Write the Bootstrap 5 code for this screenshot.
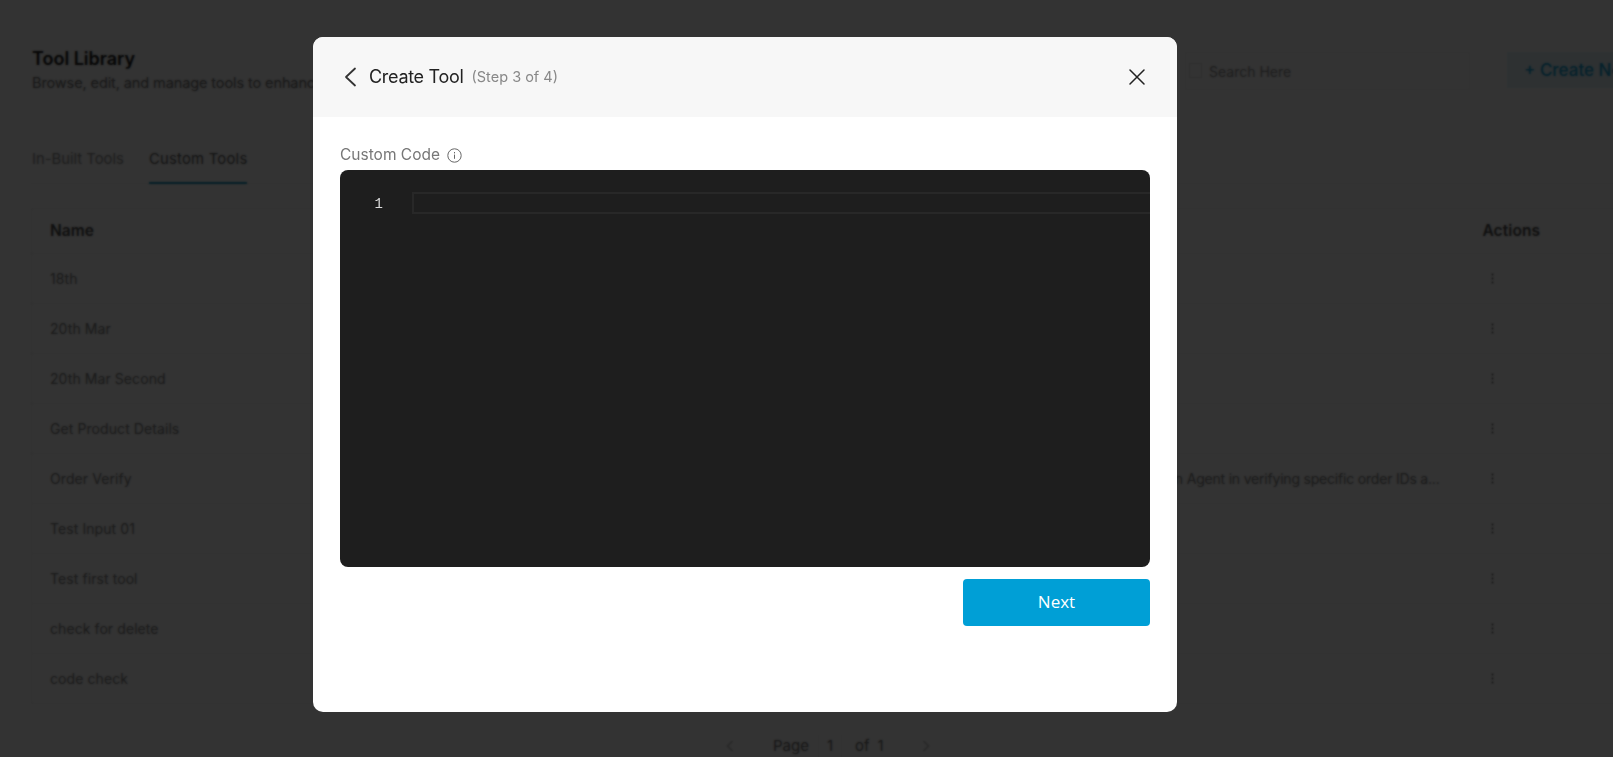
<!DOCTYPE html>
<html lang="en">
<head>
<meta charset="utf-8">
<title>Tool Library</title>
<link href="https://cdn.jsdelivr.net/npm/bootstrap@5.3.0/dist/css/bootstrap.min.css" rel="stylesheet">
<style>
html,body{height:100%;overflow:hidden}
body{font-family:"Inter","Liberation Sans",sans-serif;color:#333;background:#fff}
.page-wrap{width:1700px;padding:47px 0 0 31px}
.page-head{width:1640px;height:61px}
.lib-title{font-size:18px;font-weight:600;line-height:24px;color:#111;padding-left:1px}
.lib-sub{font-size:14.5px;line-height:22px;color:#666;letter-spacing:-.1px;padding-left:1px;margin-top:1px}
.search-box{width:285px;height:38px;margin-left:auto;margin-right:37px;margin-top:5px;border:1px solid #f2f2f2;font-size:14px;color:#888;padding-left:23px;display:flex;align-items:center;position:relative}
.search-ic{position:absolute;left:3px;top:10px;width:13px;height:15px;border:1px solid #e0e0e0}
.create-btn{width:164px;height:36px;margin-top:5px;background:#e3f3fa;color:#0a9fd4;font-size:17px;font-weight:500;padding:6px 0 0 17px;white-space:nowrap;overflow:hidden}
.tab-row{margin-top:27px;width:1640px;border-bottom:1px solid #eee;height:49px;font-size:14.8px;gap:25px;color:#888;padding-left:1px}
.tab-item{padding-top:13px;height:49px}
.tab-on{color:#555;border-bottom:2px solid #0a8fb8;letter-spacing:.25px}
.tool-table{margin-top:24px;width:1640px;table-layout:fixed;font-size:14px;border:1px solid #eee;margin-bottom:0}
.tool-table td,.tool-table th{padding:0 0 0 19px;vertical-align:middle;height:50px;border-bottom:1px solid #eee;color:#777;font-weight:400;white-space:nowrap;overflow:hidden;text-overflow:ellipsis;letter-spacing:.08px}
.tool-table th{height:45px;font-size:15.5px;font-weight:600;color:#444}
.tool-table td:first-child,.tool-table th:first-child{padding-left:18px}
.tool-table tbody tr:nth-child(n+5):nth-child(-n+8) td{border-bottom-color:#f6f6f6}
.col-name{width:368px}
.col-act{width:207px}
.tool-table .order-txt{letter-spacing:-.2px;padding-right:24px}
.dots{display:block;margin-left:8px;line-height:0}
.pager{width:1613px;margin-left:-31px;margin-top:31px;font-size:15px;color:#666;padding-left:726px}
.pager-num{padding:0 8px;margin:0 13px 0 9px;border-left:1px solid #eee;border-right:1px solid #eee}
.pager-left{margin-left:39px}
.pager-right{margin-left:38px}
.modal-backdrop.dim{opacity:.8;backdrop-filter:blur(.8px)}
.tool-dialog{width:864px;max-width:864px;margin:37px 0 0 313px}
.tool-content{height:675px;border:0;border-radius:10px;overflow:hidden}
.tool-head{height:80px;background:#f7f7f7;border:0;padding:0 32px 0 28px;border-radius:0;display:flex;align-items:center}
.head-title{font-size:18px;color:#222;margin:0 9px 0 10px;letter-spacing:-.3px;font-weight:400;line-height:1}
.head-step{font-size:14.5px;color:#888;margin-left:-1px}
.x-btn{background:none;border:0;padding:0;margin-left:auto;line-height:0}
.back-btn{background:none;border:0;padding:0;line-height:0}
.tool-body{padding:27px 27px 0 27px}
.code-label{font-size:15.5px;color:#777;line-height:20px;gap:7px;padding-top:1px;margin-bottom:5px}
.code-area{height:397px;background:#1e1e1e;border-radius:8px;padding-top:22px;overflow:hidden}
.line-no{width:72px;padding-right:29px;text-align:right;font-family:"Liberation Mono",monospace;font-size:14px;line-height:24px;color:#ddd;flex:none}
.line-cur{flex:1;height:22px;border:2px solid #282828;border-right:0}
.next-btn{width:187px;height:47px;margin-top:12px;padding:0 0 1px;background:#009fd6;border:0;border-radius:4px;color:#fff;font-size:17px;font-family:"Open Sans","Liberation Sans",sans-serif}
</style>
</head>
<body>
<svg class="d-none"><symbol id="kebab" viewBox="0 0 3 11"><circle cx="1.5" cy="1.5" r="1"/><circle cx="1.5" cy="5.5" r="1"/><circle cx="1.5" cy="9.5" r="1"/></symbol></svg>
<main class="page-wrap">
  <div class="page-head d-flex">
    <div>
      <div class="lib-title">Tool Library</div>
      <div class="lib-sub">Browse, edit, and manage tools to enhance your agents</div>
    </div>
    <div class="search-box"><span class="search-ic"></span><span>Search Here</span></div>
    <div class="create-btn">+ Create New</div>
  </div>
  <div class="tab-row d-flex">
    <div class="tab-item">In-Built Tools</div>
    <div class="tab-item tab-on">Custom Tools</div>
  </div>
  <table class="table tool-table">
    <thead><tr><th class="col-name">Name</th><th>Description</th><th class="col-act">Actions</th></tr></thead>
    <tbody>
      <tr><td>18th</td><td></td><td><i class="dots"><svg width="3" height="11" fill="#555"><use href="#kebab"/></svg></i></td></tr>
      <tr><td>20th Mar</td><td></td><td><i class="dots"><svg width="3" height="11" fill="#555"><use href="#kebab"/></svg></i></td></tr>
      <tr><td>20th Mar Second</td><td></td><td><i class="dots"><svg width="3" height="11" fill="#555"><use href="#kebab"/></svg></i></td></tr>
      <tr><td>Get Product Details</td><td></td><td><i class="dots"><svg width="3" height="11" fill="#555"><use href="#kebab"/></svg></i></td></tr>
      <tr><td>Order Verify</td><td><span class="d-block text-end order-txt">an Agent in verifying specific order IDs a...</span></td><td><i class="dots"><svg width="3" height="11" fill="#555"><use href="#kebab"/></svg></i></td></tr>
      <tr><td>Test Input 01</td><td></td><td><i class="dots"><svg width="3" height="11" fill="#555"><use href="#kebab"/></svg></i></td></tr>
      <tr><td>Test first tool</td><td></td><td><i class="dots"><svg width="3" height="11" fill="#555"><use href="#kebab"/></svg></i></td></tr>
      <tr><td>check for delete</td><td></td><td><i class="dots"><svg width="3" height="11" fill="#555"><use href="#kebab"/></svg></i></td></tr>
      <tr><td>code check</td><td></td><td><i class="dots"><svg width="3" height="11" fill="#555"><use href="#kebab"/></svg></i></td></tr>
    </tbody>
  </table>
  <div class="pager d-flex align-items-center">
    <svg width="8" height="12" viewBox="0 0 8 12" fill="none" stroke="#bbb" stroke-width="1.5"><path d="M6.5 1 1.5 6l5 5"/></svg>
    <span class="pager-left">Page</span><span class="pager-num">1</span><span>of</span><span class="ms-2">1</span>
    <svg class="pager-right" width="8" height="12" viewBox="0 0 8 12" fill="none" stroke="#bbb" stroke-width="1.5"><path d="m1.5 1 5 5-5 5"/></svg>
  </div>
</main>

<div class="modal-backdrop show dim"></div>
<div class="modal d-block" tabindex="-1">
  <div class="modal-dialog tool-dialog">
    <div class="modal-content tool-content">
      <div class="modal-header tool-head">
        <button class="back-btn" aria-label="Back"><svg width="18" height="20" viewBox="0 0 18 20" fill="none" stroke="#333" stroke-width="1.8" stroke-linecap="round" stroke-linejoin="round"><path d="M14 1.5 5 10l9 8.5"/></svg></button>
        <h5 class="modal-title head-title">Create Tool</h5>
        <span class="head-step">(Step 3 of 4)</span>
        <button class="x-btn" aria-label="Close"><svg width="16" height="16" viewBox="0 0 16 16" fill="none" stroke="#222" stroke-width="1.5" stroke-linecap="round"><path d="M1 1l14 14M15 1 1 15"/></svg></button>
      </div>
      <div class="modal-body tool-body">
        <div class="code-label d-flex align-items-center">Custom Code
          <svg width="15" height="15" viewBox="0 0 15 15" fill="none" stroke="#666"><circle cx="7.5" cy="7.5" r="6.7"/><path d="M7.5 6.6v4.2M7.5 4v1.4"/></svg>
        </div>
        <div class="code-area d-flex align-items-start">
          <div class="line-no">1</div>
          <div class="line-cur"></div>
        </div>
        <div class="d-flex justify-content-end"><button class="btn next-btn">Next</button></div>
      </div>
    </div>
  </div>
</div>
<script src="https://cdn.jsdelivr.net/npm/bootstrap@5.3.0/dist/js/bootstrap.bundle.min.js"></script>
</body>
</html>
